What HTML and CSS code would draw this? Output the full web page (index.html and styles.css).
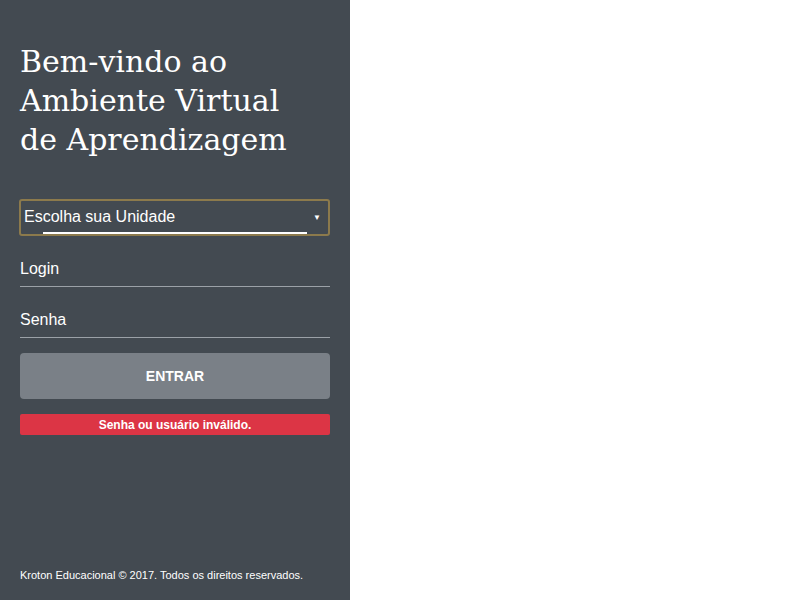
FILE: index.html
```html
<!DOCTYPE html>
<html lang="pt-BR">
<head>
<meta charset="utf-8">
<title>AVA</title>
<link rel="stylesheet" href="styles.css">
</head>
<body>
<div class="page">
  <aside class="sidebar">
    <h1 class="title">Bem-vindo ao<br>Ambiente Virtual<br>de Aprendizagem</h1>
    <form class="form">
      <div class="select">
        <span class="select-text">Escolha sua Unidade</span>
        <span class="select-arrow">▼</span>
        <span class="select-line"></span>
      </div>
      <div class="field">Login</div>
      <div class="field">Senha</div>
      <div class="button">ENTRAR</div>
      <div class="error">Senha ou usuário inválido.</div>
    </form>
    <footer class="footer">Kroton Educacional © 2017. Todos os direitos reservados.</footer>
  </aside>
  <main class="content"></main>
</div>
</body>
</html>
```

FILE: styles.css
```css
html, body {
  margin: 0;
  padding: 0;
  height: 100%;
}
body {
  font-family: "Liberation Sans", Arial, sans-serif;
  background: #ffffff;
}
.page {
  display: flex;
  height: 600px;
}
.sidebar {
  width: 350px;
  flex: none;
  background: #434a51;
  box-sizing: border-box;
  padding: 0 20px;
  display: flex;
  flex-direction: column;
  color: #fff;
}
.content {
  flex: 1;
  background: #fff;
}
.title {
  font-family: "DejaVu Serif", serif;
  font-weight: normal;
  font-size: 30px;
  line-height: 39px;
  margin: 42px 0 0 0;
  color: #fff;
  white-space: nowrap;
}
.form {
  margin-top: 40px;
  display: flex;
  flex-direction: column;
}
.select {
  position: relative;
  height: 37px;
  margin-left: -1px;
  border: 2px solid #8c7a4c;
  border-radius: 3px;
  box-sizing: border-box;
  display: flex;
  align-items: center;
  padding: 0 5px 0 3px;
  font-size: 16px;
}
.select-text {
  flex: 1;
  position: relative;
  top: -1px;
}
.select-arrow {
  font-size: 8px;
  margin-right: 2px;
}
.select-line {
  position: absolute;
  left: 22px;
  right: 21px;
  bottom: 0;
  height: 2px;
  background: #fff;
}
.field {
  height: 51px;
  box-sizing: border-box;
  border-bottom: 1px solid #9ba1a7;
  font-size: 16px;
  line-height: 16px;
  padding-top: 25px;
}
.button {
  margin-top: 15px;
  height: 46px;
  background: #7a8087;
  border-radius: 4px;
  display: flex;
  align-items: center;
  justify-content: center;
  font-weight: bold;
  font-size: 14px;
}
.error {
  margin-top: 15px;
  height: 21px;
  background: #dc3545;
  border-radius: 2px;
  display: flex;
  align-items: center;
  justify-content: center;
  font-weight: bold;
  font-size: 12px;
}
.footer {
  margin-top: auto;
  margin-bottom: 19px;
  font-size: 11px;
  font-weight: normal;
}
```
